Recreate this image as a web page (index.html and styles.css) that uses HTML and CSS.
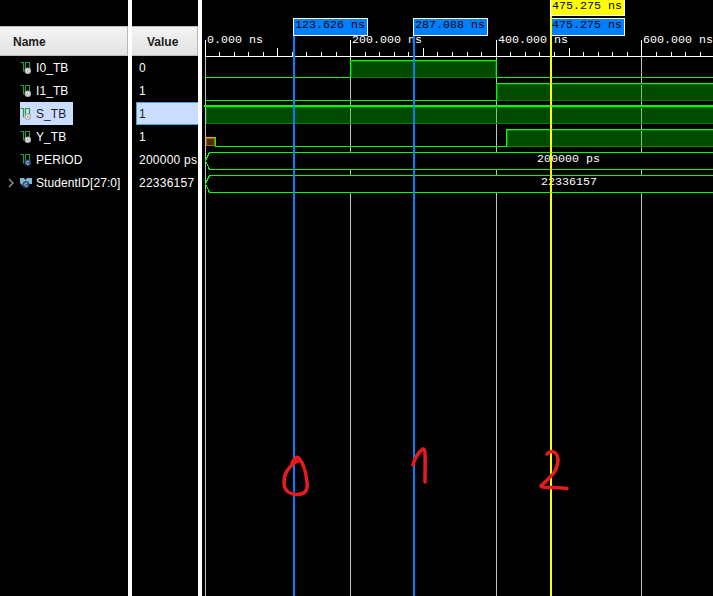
FILE: index.html
```html
<!DOCTYPE html>
<html lang="en">
<head>
<meta charset="utf-8">
<title>Waveform viewer</title>
<link rel="stylesheet" href="styles.css">
</head>
<body>
<svg class="defs" width="0" height="0" aria-hidden="true">
  <defs>
    <g id="wire">
      <path d="M0.5 1.5H3.500V10.5M5.5 11V1.5H9.5V8" fill="none" stroke="#2f9444" stroke-width="1.2"/>
    </g>
    <symbol id="signal" viewBox="0 0 12 14">
      <use href="#wire"/>
      <circle cx="7.8" cy="9.7" r="2.6" fill="#eee" stroke="#b0b0b0" stroke-width="1.3"/>
      <circle cx="7.8" cy="9.7" r="0.8" fill="#777"/>
    </symbol>
    <symbol id="constant" viewBox="0 0 12 14">
      <use href="#wire"/>
      <circle cx="7.8" cy="9.7" r="3.3" fill="#2d4b7c"/>
      <path d="M9 8.6A1.5 1.5 0 1 0 9 10.8" fill="none" stroke="#c5d3e8" stroke-width="0.9"/>
    </symbol>
    <symbol id="bus" viewBox="0 0 12 14">
      <path d="M0 2H4L5.5 4L7 2H12V8H9V10H3L0 7Z" fill="#86b7d4"/>
      <circle cx="6" cy="8.500" r="3.5" fill="#2d4b7c"/>
      <path d="M7.2 7.4A1.5 1.5 0 1 0 7.2 9.6" fill="none" stroke="#d2dded" stroke-width="0.9"/>
    </symbol>
  </defs>
</svg>
<main class="viewer">
  <section class="names">
    <h2 class="head">Name</h2>
    <ul class="rows">
      <li class="row"><span class="item"><svg class="icon"><use href="#signal"/></svg>I0_TB</span></li>
      <li class="row"><span class="item"><svg class="icon"><use href="#signal"/></svg>I1_TB</span></li>
      <li class="row"><span class="item selected"><svg class="icon"><use href="#signal"/></svg>S_TB</span></li>
      <li class="row"><span class="item"><svg class="icon"><use href="#signal"/></svg>Y_TB</span></li>
      <li class="row"><span class="item"><svg class="icon"><use href="#constant"/></svg>PERIOD</span></li>
      <li class="row expandable"><svg class="chevron" viewBox="0 0 6 10"><path d="M1 1L5 5L1 9"/></svg><span class="item"><svg class="icon"><use href="#bus"/></svg>StudentID[27:0]</span></li>
    </ul>
  </section>
  <section class="values">
    <h2 class="head">Value</h2>
    <ul class="rows">
      <li class="row">0</li>
      <li class="row">1</li>
      <li class="row current">1</li>
      <li class="row">1</li>
      <li class="row">200000 ps</li>
      <li class="row">22336157</li>
    </ul>
  </section>
  <section class="waves">
    <svg class="plot" viewBox="202 0 511 596" width="511" height="596" shape-rendering="crispEdges">
      <path class="grid" d="M205.5 40V596M350.5 40V596M496.5 40V596M641.5 40V596"/>
      <path class="ruler" d="M205 56.5H713M205.5 40V57M350.5 40V57M496.5 40V57M641.5 40V57M277.5 48V57M423.5 48V57M569.5 48V57"/>
      <path class="ruler" d="M219.5 52V57M234.5 52V57M248.5 52V57M263.5 52V57M292.5 52V57M306.5 52V57M321.5 52V57M336.5 52V57M365.5 52V57M379.5 52V57M394.5 52V57M408.5 52V57M437.5 52V57M452.5 52V57M467.5 52V57M481.5 52V57M510.5 52V57M525.5 52V57M539.5 52V57M554.5 52V57M583.5 52V57M598.5 52V57M612.5 52V57M627.5 52V57M656.5 52V57M671.5 52V57M685.5 52V57M700.5 52V57"/>

      <g class="fill">
        <rect x="350" y="60" width="147" height="17"/>
        <rect x="496" y="83" width="217" height="17"/>
        <rect x="206" y="106" width="507" height="17"/>
        <rect x="506" y="129" width="207" height="17"/>
      </g>
      <path class="grid-tint" d="M641.5 85V100M350.5 108V123M496.5 108V123M641.5 108V123M641.5 131V146"/>
      <path class="edge" d="M351 77.5H496M497 100.5H713M206 123.5H713M507 146.5H713M351 61.5H496M351.5 61V77M495.5 61V77M497 84.5H713M497.5 84V100M206 107.5H713M206.5 107V123M507 130.5H713M507.5 130V146"/>
      <path class="trace" d="M205 77.5H350.5V60.5H496.5V77.5H713M205 100.5H496.5V83.5H713M215.5 137V146.5H506.5V129.5H713"/>
      <path class="edge" d="M351 77.5H496"/>
      <rect class="bold" x="204" y="105" width="509" height="2"/>
      <rect class="unknown" x="206.5" y="138.5" width="8" height="7"/>
      <path class="unknown-top" d="M205 137.5H215"/>

      <g class="bus">
        <path d="M715 152.5H209.5L205.5 160.5L209.5 169.5H715"/>
        <path d="M715 175.5H209.5L205.5 183.5L209.5 192.5H715"/>
      </g>

      <g class="label">
        <text x="207" y="43">0.000 ns</text>
        <text x="352" y="43">200.000 ns</text>
        <text x="498" y="43">400.000 ns</text>
        <text x="643" y="43">600.000 ns</text>
        <text x="537" y="162">200000 ps</text>
        <text x="541" y="185">22336157</text>
      </g>

      <rect class="marker" x="293" y="18" width="2" height="578"/>
      <rect class="marker" x="413" y="18" width="2" height="578"/>
      <g class="flag">
        <rect x="293.5" y="18.5" width="74" height="17"/>
        <rect x="413.5" y="18.5" width="74" height="17"/>
        <rect x="550.5" y="18.5" width="74" height="17"/>
        <rect class="cursor-flag" x="550.5" y="-1.5" width="74" height="17"/>
      </g>
      <rect class="cursor" x="550" y="16" width="2" height="580"/>
      <g class="label dark">
        <text x="295" y="28">123.626 ns</text>
        <text x="415" y="28">287.088 ns</text>
        <text x="552" y="28">475.275 ns</text>
        <text x="552" y="9">475.275 ns</text>
      </g>

      <g class="ink" shape-rendering="geometricPrecision">
        <path d="M299.500 461C297 460 291 465 287 471C283 477 283 487 287 491C290 494 296 495 301 494C306 493 308 489 307 482C306 472 303 463 299 458C296 456 294 459 292 463"/>
        <path d="M413 465C415 457 419 452 423 449C426 448 425 460 425 482"/>
        <path d="M547 454C552 449 558 452 558 461C557 473 550 477 541 486C543 489 552 486 567 488.500"/>
      </g>
    </svg>
  </section>
</main>
</body>
</html>
```

FILE: styles.css
```css
* {
  box-sizing: border-box;
}

body {
  margin: 0;
  background: #000;
  overflow: hidden;
  font: 12px "Liberation Sans", Arial, sans-serif;
  color: #fff;
}

.defs {
  display: block;
}

.viewer {
  display: grid;
  grid-template-columns: 128px 66px 511px;
  column-gap: 4px;
  height: 596px;
  background: #fff;
}

.names,
.values,
.waves {
  background: #000;
  overflow: hidden;
}

.names,
.values {
  padding-top: 26px;
}

.head {
  height: 30px;
  margin: 0;
  padding-left: 13px;
  border: 1px solid #b9b9b9;
  border-left: 0;
  background: linear-gradient(#f4f4f4, #e2e2e4);
  color: #1c1c1c;
  font-size: 12px;
  font-weight: bold;
  line-height: 30px;
}

.values .head {
  padding-left: 15px;
}

.rows {
  margin: 0;
  padding: 0;
  list-style: none;
}

.row {
  display: flex;
  align-items: center;
  height: 23px;
  padding-left: 20px;
  white-space: nowrap;
  letter-spacing: 0.07px;
}

.item {
  display: flex;
  align-items: center;
  height: 23px;
  padding-right: 7px;
}

.selected {
  background: #cbddff;
  color: #1c1c1c;
}

.icon {
  width: 12px;
  height: 14px;
  margin-right: 4px;
}

.expandable {
  padding-left: 8px;
}

.chevron {
  width: 6px;
  height: 10px;
  margin-right: 6px;
  fill: none;
  stroke: #999;
  stroke-width: 1.3;
}

.values .row {
  margin-left: 4px;
  padding-left: 3px;
  letter-spacing: 0.24px;
}

.values .current {
  border: solid #4a9edb;
  border-width: 1px 0 1px 1px;
  padding-left: 2px;
  background: #cbddff;
  color: #1c1c1c;
}

.plot {
  display: block;
}

.grid {
  stroke: #c0c0c0;
}

.ruler {
  stroke: #fff;
}

.fill {
  fill: #004b00;
}

.grid-tint {
  stroke: #80c080;
}

.edge {
  stroke: #008000;
}

.trace {
  fill: none;
  stroke: #0f0;
}

.bold {
  fill: #0f0;
}

.unknown {
  fill: #4c3000;
  stroke: #a06400;
}

.unknown-top {
  stroke: #ffa000;
}

.bus {
  fill: #000;
  stroke: #0f0;
}

.label {
  fill: #fff;
  font: 11.67px "Liberation Mono", "Courier New", monospace;
  white-space: pre;
}

.dark {
  fill: #000;
}

.marker {
  fill: #007fff;
}

.flag {
  fill: #007fff;
  stroke: #fff;
}

.cursor,
.flag .cursor-flag {
  fill: #ff0;
}

.ink {
  fill: none;
  stroke: #e51b20;
  stroke-width: 3.5;
  stroke-linecap: round;
  stroke-linejoin: round;
}
```
